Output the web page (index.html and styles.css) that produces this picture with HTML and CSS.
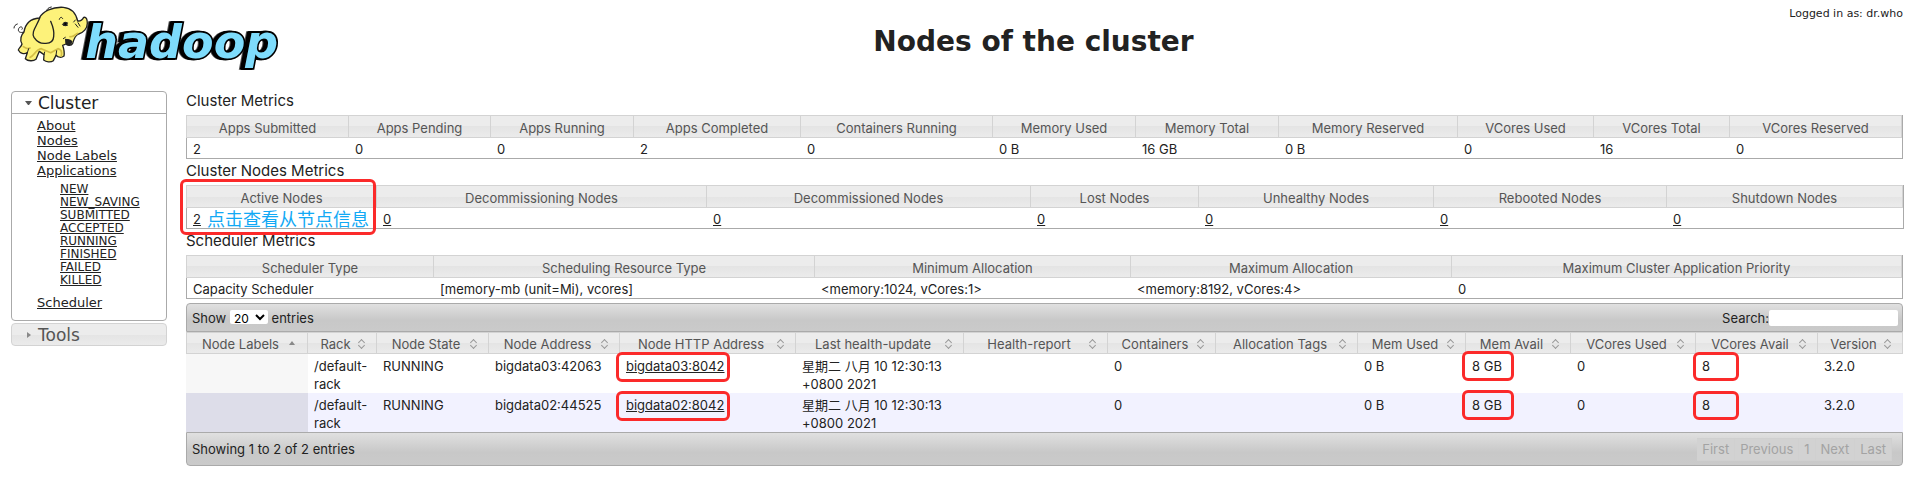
FILE: index.html
```html
<!DOCTYPE html>
<html lang="en">
<head>
    <meta charset="UTF-8">
    <meta name="viewport" content="width=device-width, initial-scale=1.0">
    <title>Nodes of the cluster</title>
    <link rel="stylesheet" href="styles.css">
</head>
<body>
    <header class="header">
        <a class="logo" href="#" aria-label="hadoop">
            <svg width="300" height="84" viewBox="0 0 900 252">
                <text class="wordmark" x="256" y="174">hadoop</text>
                <g class="elephant">
                    <path class="line" d="M72 96C62 100 52 96 56 86C60 76 72 82 66 88M42 84C42 78 46 74 52 72M139 34C140 27 146 22 154 21"/>
                    <path class="skin" d="M72 96C76 70 92 56 118 54C128 34 158 20 190 22C214 24 228 40 233 63C242 64 248 58 251 52C259 50 262 58 262 70C262 86 250 98 236 102C228 105 222 116 218 130C214 138 202 138 198 132L188 136C192 148 194 158 192 168C184 174 174 172 168 166L160 182C152 188 138 186 131 180L132 164L118 154L108 178C100 184 84 184 76 176L82 158C72 164 60 160 55 150C56 144 64 140 66 132C58 120 64 104 72 96Z"/>
                    <path class="shade" d="M90 172C104 168 106 148 124 146L152 158L174 146C184 148 186 158 184 168M70 140C78 146 84 148 90 144M210 110C220 112 226 104 232 100"/>
                    <path class="skin" d="M120 52C112 76 92 96 102 112C110 124 122 132 138 130C152 130 160 124 161 110C164 92 158 78 152 64"/>
                    <path class="mouth" d="M197 118C204 120 210 118 215 124C214 134 206 138 198 130Z"/>
                    <path class="line" d="M187 73L203 69M190 76L202 76M178 58C180 50 186 50 188 56M226 72L234 82M234 68L240 78M221 66L226 60M196 112L190 116M82 158L86 146M132 164L134 156M168 166L170 152"/>
                    <circle cx="196" cy="72" r="5"/>
                </g>
            </svg>
        </a>
        <h1>Nodes of the cluster</h1>
        <div class="user">Logged in as: dr.who</div>
    </header>

    <div class="layout">
        <nav class="sidebar">
            <section class="nav-open">
                <h3><button type="button"><span class="arrow-down"></span>Cluster</button></h3>
                <div class="nav-body">
                    <ul>
                        <li><a href="#">About</a></li>
                        <li><a href="#">Nodes</a></li>
                        <li><a href="#">Node Labels</a></li>
                        <li><a href="#">Applications</a>
                            <ul class="states">
                                <li><a href="#">NEW</a></li>
                                <li><a href="#">NEW_SAVING</a></li>
                                <li><a href="#">SUBMITTED</a></li>
                                <li><a href="#">ACCEPTED</a></li>
                                <li><a href="#">RUNNING</a></li>
                                <li><a href="#">FINISHED</a></li>
                                <li><a href="#">FAILED</a></li>
                                <li><a href="#">KILLED</a></li>
                            </ul>
                        </li>
                        <li><a href="#">Scheduler</a></li>
                    </ul>
                </div>
            </section>
            <h3 class="nav-closed"><button type="button"><span class="arrow-right"></span>Tools</button></h3>
        </nav>

        <main class="content">
            <h2>Cluster Metrics</h2>
            <table class="metrics apps">
                <colgroup><col><col><col><col><col><col><col><col><col><col><col></colgroup>
                <thead>
                    <tr>
                        <th>Apps Submitted</th>
                        <th>Apps Pending</th>
                        <th>Apps Running</th>
                        <th>Apps Completed</th>
                        <th>Containers Running</th>
                        <th>Memory Used</th>
                        <th>Memory Total</th>
                        <th>Memory Reserved</th>
                        <th>VCores Used</th>
                        <th>VCores Total</th>
                        <th>VCores Reserved</th>
                    </tr>
                </thead>
                <tbody>
                    <tr>
                        <td>2</td>
                        <td>0</td>
                        <td>0</td>
                        <td>2</td>
                        <td>0</td>
                        <td>0 B</td>
                        <td>16 GB</td>
                        <td>0 B</td>
                        <td>0</td>
                        <td>16</td>
                        <td>0</td>
                    </tr>
                </tbody>
            </table>

            <h2>Cluster Nodes Metrics</h2>
            <table class="metrics nodes-summary">
                <colgroup><col><col><col><col><col><col><col></colgroup>
                <thead>
                    <tr>
                        <th>Active Nodes</th>
                        <th>Decommissioning Nodes</th>
                        <th>Decommissioned Nodes</th>
                        <th>Lost Nodes</th>
                        <th>Unhealthy Nodes</th>
                        <th>Rebooted Nodes</th>
                        <th>Shutdown Nodes</th>
                    </tr>
                </thead>
                <tbody>
                    <tr>
                        <td class="marked"><a href="#">2</a><span class="note" lang="zh">点击查看从节点信息</span><span class="mark mark-active"></span></td>
                        <td><a href="#">0</a></td>
                        <td><a href="#">0</a></td>
                        <td><a href="#">0</a></td>
                        <td><a href="#">0</a></td>
                        <td><a href="#">0</a></td>
                        <td><a href="#">0</a></td>
                    </tr>
                </tbody>
            </table>

            <h2>Scheduler Metrics</h2>
            <table class="metrics scheduler">
                <colgroup><col><col><col><col><col></colgroup>
                <thead>
                    <tr>
                        <th>Scheduler Type</th>
                        <th>Scheduling Resource Type</th>
                        <th>Minimum Allocation</th>
                        <th>Maximum Allocation</th>
                        <th>Maximum Cluster Application Priority</th>
                    </tr>
                </thead>
                <tbody>
                    <tr>
                        <td>Capacity Scheduler</td>
                        <td>[memory-mb (unit=Mi), vcores]</td>
                        <td>&lt;memory:1024, vCores:1&gt;</td>
                        <td>&lt;memory:8192, vCores:4&gt;</td>
                        <td>0</td>
                    </tr>
                </tbody>
            </table>

            <div class="bar bar-top">
                <label class="length">Show
                    <select>
                        <option>20</option>
                        <option>40</option>
                        <option>60</option>
                        <option>80</option>
                        <option>100</option>
                    </select>
                    entries
                </label>
                <label class="search">Search:<input type="text"></label>
            </div>
            <table class="nodes">
                <colgroup><col><col><col><col><col><col><col><col><col><col><col><col><col><col></colgroup>
                <thead>
                    <tr>
                        <th class="sorted">Node Labels</th>
                        <th>Rack</th>
                        <th>Node State</th>
                        <th>Node Address</th>
                        <th>Node HTTP Address</th>
                        <th>Last health-update</th>
                        <th>Health-report</th>
                        <th>Containers</th>
                        <th>Allocation Tags</th>
                        <th>Mem Used</th>
                        <th>Mem Avail</th>
                        <th>VCores Used</th>
                        <th>VCores Avail</th>
                        <th>Version</th>
                    </tr>
                </thead>
                <tbody>
                    <tr>
                        <td></td>
                        <td>/default-rack</td>
                        <td>RUNNING</td>
                        <td>bigdata03:42063</td>
                        <td class="marked"><a href="#">bigdata03:8042</a><span class="mark mark-http"></span></td>
                        <td>星期二 八月 10 12:30:13 +0800 2021</td>
                        <td></td>
                        <td>0</td>
                        <td></td>
                        <td>0 B</td>
                        <td class="marked">8 GB<span class="mark mark-mem"></span></td>
                        <td>0</td>
                        <td class="marked">8<span class="mark mark-vcores"></span></td>
                        <td>3.2.0</td>
                    </tr>
                    <tr>
                        <td></td>
                        <td>/default-rack</td>
                        <td>RUNNING</td>
                        <td>bigdata02:44525</td>
                        <td class="marked"><a href="#">bigdata02:8042</a><span class="mark mark-http"></span></td>
                        <td>星期二 八月 10 12:30:13 +0800 2021</td>
                        <td></td>
                        <td>0</td>
                        <td></td>
                        <td>0 B</td>
                        <td class="marked">8 GB<span class="mark mark-mem"></span></td>
                        <td>0</td>
                        <td class="marked">8<span class="mark mark-vcores"></span></td>
                        <td>3.2.0</td>
                    </tr>
                </tbody>
            </table>
            <div class="bar bar-bottom">
                <div>Showing 1 to 2 of 2 entries</div>
                <div class="pages">
                    <button type="button" disabled>First</button>
                    <button type="button" disabled>Previous</button>
                    <button type="button" disabled>1</button>
                    <button type="button" disabled>Next</button>
                    <button type="button" disabled>Last</button>
                </div>
            </div>
        </main>
    </div>
</body>
</html>
```
FILE: styles.css
```css
* {
    box-sizing: border-box;
}

body {
    margin: 0;
    background: #fff;
    color: #222;
    font-family: Inter, "Noto Sans CJK SC", sans-serif;
    font-size: 13px;
    line-height: 18px;
}

a {
    color: inherit;
}

/* header */
.header {
    display: grid;
    grid-template-columns: 300px 1fr 300px;
    padding-right: 8px;
    height: 88px;
    font-family: "DejaVu Sans", sans-serif;
}

.logo svg {
    display: block;
}

.elephant {
    stroke: #222;
    stroke-width: 4;
    stroke-linejoin: round;
    stroke-linecap: round;
}

.skin {
    fill: #fdf27a;
}

.line {
    fill: none;
    stroke-width: 3;
}

.shade {
    fill: none;
    stroke: #d3bd45;
    stroke-width: 5;
}

.mouth {
    fill: #222;
}

.wordmark {
    fill: #7edcfc;
    stroke: #000;
    stroke-width: 10;
    paint-order: stroke;
    font-family: "DejaVu Sans", sans-serif;
    font-size: 138px;
    font-weight: bold;
    font-style: oblique;
    filter: drop-shadow(-6px 0 0 #000) drop-shadow(-5px 0 0 #000);
}

.header h1 {
    margin: 24px 0 0 164px;
    font-size: 28px;
    line-height: 36px;
    text-align: center;
}

.header .user {
    padding-top: 5px;
    font-size: 11px;
    text-align: right;
}

.layout {
    display: flex;
    gap: 19px;
    padding: 0 8px 20px 11px;
}

/* sidebar */
.sidebar {
    flex: 0 0 156px;
    padding-top: 3px;
    font-family: "DejaVu Sans", sans-serif;
}

.sidebar h3 {
    margin: 0;
}

.sidebar button {
    display: flex;
    align-items: center;
    width: 100%;
    height: 21px;
    padding: 0 0 0 13px;
    border: 0;
    background: none;
    color: inherit;
    font: 17px/20px "DejaVu Sans", sans-serif;
}

.nav-open {
    border: 1px solid #aaa;
    border-radius: 4px;
}

.nav-open h3 {
    border-bottom: 1px solid #aaa;
}

.sidebar .nav-closed {
    margin-top: 2px;
    border: 1px solid #d3d3d3;
    border-radius: 4px;
    background: linear-gradient(#ececec 50%, #e4e4e4 50%, #ebebeb);
    color: #555;
}

.arrow-down,
.arrow-right {
    width: 7px;
    margin-right: 6px;
}

.arrow-down {
    border: solid transparent;
    border-width: 4px 3px 0;
    border-top-color: #555;
}

.arrow-right::before {
    content: "";
    display: block;
    width: 4px;
    border: solid transparent;
    border-width: 3px 0 3px 4px;
    border-left-color: #888;
    margin-left: 2px;
}

.nav-body {
    padding: 4px 0 10px 25px;
    font-size: 13px;
    line-height: 15px;
}

.nav-body ul {
    margin: 0;
    padding: 0;
    list-style: none;
}

.nav-body .states {
    padding: 5px 0 8px 23px;
    font-size: 12px;
    line-height: 13px;
}

/* metrics tables */
.content {
    flex: 1;
    min-width: 0;
    padding-top: 1px;
}

.content h2 {
    margin: 0;
    font-size: 15px;
    font-weight: normal;
    line-height: 24px;
    height: 26px;
}

table {
    width: 100%;
    table-layout: fixed;
    border-collapse: separate;
    border-spacing: 0;
}

th {
    height: 23px;
    padding: 3px 0 0;
    border: solid #d3d3d3;
    border-width: 1px 1px 1px 0;
    background: linear-gradient(#ececec 50%, #e4e4e4 50%, #ebebeb);
    color: #555;
    font-weight: normal;
    line-height: 18px;
    white-space: nowrap;
}

th:first-child {
    border-left-width: 1px;
}

.metrics {
    border: solid #aaa;
    border-width: 0 1px 1px 0;
}

.metrics td {
    height: 20px;
    padding: 2px 6px 0;
}

.metrics td:first-child {
    border-left: 1px solid #aaa;
}

.apps col:nth-child(1) { width: 163px; }
.apps col:nth-child(2) { width: 142px; }
.apps col:nth-child(3) { width: 143px; }
.apps col:nth-child(4) { width: 167px; }
.apps col:nth-child(5) { width: 192px; }
.apps col:nth-child(6) { width: 143px; }
.apps col:nth-child(7) { width: 143px; }
.apps col:nth-child(8) { width: 179px; }
.apps col:nth-child(9) { width: 136px; }
.apps col:nth-child(10) { width: 136px; }
.apps col:nth-child(11) { width: 172px; }

.nodes-summary col:nth-child(1) { width: 191px; }
.nodes-summary col:nth-child(2) { width: 330px; }
.nodes-summary col:nth-child(3) { width: 324px; }
.nodes-summary col:nth-child(4) { width: 168px; }
.nodes-summary col:nth-child(5) { width: 235px; }
.nodes-summary col:nth-child(6) { width: 233px; }
.nodes-summary col:nth-child(7) { width: 236px; }

.scheduler col:nth-child(1) { width: 248px; }
.scheduler col:nth-child(2) { width: 381px; }
.scheduler col:nth-child(3) { width: 316px; }
.scheduler col:nth-child(4) { width: 321px; }
.scheduler col:nth-child(5) { width: 450px; }

/* nodes table */
.bar {
    display: flex;
    justify-content: space-between;
    align-items: center;
    padding: 0 4px 0 5px;
    border: 1px solid #aaa;
    background: linear-gradient(#e0e0e0, #c8c8c8 60%, #cacaca);
}

.bar-top {
    height: 29px;
    margin-top: 4px;
    border-radius: 4px 4px 0 0;
}

.bar-bottom {
    height: 34px;
    padding-right: 10px;
    border-radius: 0 0 4px 4px;
}

.length select {
    width: 38px;
    height: 14px;
    padding: 0;
    border: 0;
    border-radius: 2px;
    background: #fff;
    color: #000;
    font: 12px/14px Inter, sans-serif;
}

.search {
    display: flex;
    align-items: center;
}

.search input {
    width: 129px;
    height: 16px;
    padding: 0 2px;
    border: 0;
    border-radius: 2px;
    background: #fff;
}

.nodes th {
    position: relative;
    height: 22px;
    padding: 2px 13px 0 0;
}

/* sort arrows */
.nodes th::before,
.nodes th::after {
    content: "";
    position: absolute;
    right: 12px;
    width: 4px;
    height: 4px;
    border: solid #999;
    border-width: 1px 0 0 1px;
}

.nodes th::before {
    top: 7px;
    transform: rotate(45deg);
}

.nodes th::after {
    top: 10px;
    transform: rotate(225deg);
}

.nodes .sorted::before {
    display: none;
}

.nodes .sorted::after {
    top: 8px;
    width: 6px;
    height: 4px;
    border: 0;
    background: #888;
    clip-path: polygon(50% 0, 100% 100%, 0 100%);
    transform: none;
}

.nodes td {
    height: 39px;
    padding: 3px 6px 0;
    vertical-align: top;
}

.nodes td:first-child {
    background: #f7f7f7;
}

.nodes tr:nth-child(2) td {
    background: #f2f2ff;
}

.nodes tr:nth-child(2) td:first-child {
    background: #dddde9;
}

.nodes col:nth-child(1) { width: 122px; }
.nodes col:nth-child(2) { width: 69px; }
.nodes col:nth-child(3) { width: 112px; }
.nodes col:nth-child(4) { width: 131px; }
.nodes col:nth-child(5) { width: 176px; }
.nodes col:nth-child(6) { width: 168px; }
.nodes col:nth-child(7) { width: 144px; }
.nodes col:nth-child(8) { width: 108px; }
.nodes col:nth-child(9) { width: 142px; }
.nodes col:nth-child(10) { width: 108px; }
.nodes col:nth-child(11) { width: 105px; }
.nodes col:nth-child(12) { width: 125px; }
.nodes col:nth-child(13) { width: 122px; }
.nodes col:nth-child(14) { width: 85px; }

.pages {
    display: flex;
}

.pages button {
    height: 23px;
    padding: 0 5px;
    border: 1px solid #d0d0d0;
    border-left-width: 0;
    background: #d2d2d2;
    color: #a3a3a3;
    font: 13px/18px Inter, sans-serif;
}

/* red frames and note over the cells */
.marked {
    position: relative;
}

.note {
    position: absolute;
    left: 20px;
    top: -2px;
    color: #12a9f5;
    font: 18px/24px "Noto Sans CJK SC", sans-serif;
    white-space: nowrap;
}

.mark {
    position: absolute;
    z-index: 1;
    border: 3px solid #fb2a2a;
    border-radius: 6px;
}

.mark-active {
    left: -7px;
    top: -29px;
    width: 196px;
    height: 56px;
}

.mark-http {
    left: -4px;
    top: -2px;
    width: 114px;
    height: 30px;
}

.mark-mem {
    left: -4px;
    top: -3px;
    width: 52px;
    height: 30px;
}

.mark-vcores {
    left: -3px;
    top: -2px;
    width: 46px;
    height: 29px;
}
```
